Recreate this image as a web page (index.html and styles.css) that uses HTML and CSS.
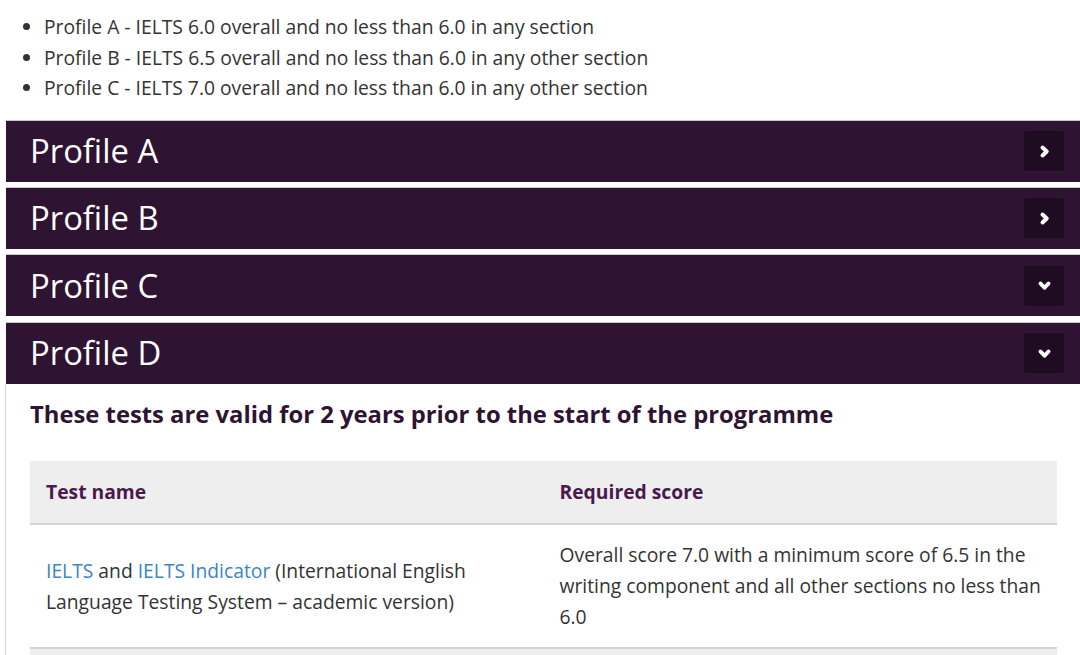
FILE: index.html
```
<!DOCTYPE html>
<html lang="en">
<head>
<meta charset="utf-8">
<title>Profiles</title>
<link rel="stylesheet" href="styles.css">
</head>
<body>
<div class="page">
  <ul class="bullets">
    <li>Profile A - IELTS 6.0 overall and no less than 6.0 in any section</li>
    <li>Profile B - IELTS 6.5 overall and no less than 6.0 in any other section</li>
    <li>Profile C - IELTS 7.0 overall and no less than 6.0 in any other section</li>
  </ul>
  <div class="accordion">
    <div class="item">
      <div class="bar">
        <h2 class="title">Profile A</h2>
        <span class="toggle"><svg width="15" height="15" viewBox="0 0 12 12"><path d="M4.4 2.8 L7.8 6 L4.4 9.2" fill="none" stroke="#fff" stroke-width="3.2" stroke-linecap="round" stroke-linejoin="round"/></svg></span>
      </div>
    </div>
    <div class="item">
      <div class="bar">
        <h2 class="title">Profile B</h2>
        <span class="toggle"><svg width="15" height="15" viewBox="0 0 12 12"><path d="M4.4 2.8 L7.8 6 L4.4 9.2" fill="none" stroke="#fff" stroke-width="3.2" stroke-linecap="round" stroke-linejoin="round"/></svg></span>
      </div>
    </div>
    <div class="item">
      <div class="bar">
        <h2 class="title">Profile C</h2>
        <span class="toggle"><svg width="15" height="15" viewBox="0 0 12 12"><path d="M2.8 4.4 L6 7.8 L9.2 4.4" fill="none" stroke="#fff" stroke-width="3.2" stroke-linecap="round" stroke-linejoin="round"/></svg></span>
      </div>
    </div>
    <div class="item open">
      <div class="bar">
        <h2 class="title">Profile D</h2>
        <span class="toggle"><svg width="15" height="15" viewBox="0 0 12 12"><path d="M2.8 4.4 L6 7.8 L9.2 4.4" fill="none" stroke="#fff" stroke-width="3.2" stroke-linecap="round" stroke-linejoin="round"/></svg></span>
      </div>
      <div class="panel">
        <h3 class="panel-title">These tests are valid for 2 years prior to the start of the programme</h3>
        <table class="scores">
          <thead>
            <tr><th>Test name</th><th>Required score</th></tr>
          </thead>
          <tbody>
            <tr>
              <td><a href="#">IELTS</a> and <a href="#">IELTS Indicator</a> (International English Language Testing System – academic version)</td>
              <td>Overall score 7.0 with a minimum score of 6.5 in the writing component and all other sections no less than 6.0</td>
            </tr>
            <tr class="alt">
              <td>&nbsp;</td>
              <td>&nbsp;</td>
            </tr>
          </tbody>
        </table>
      </div>
    </div>
  </div>
</div>
</body>
</html>
```
FILE: styles.css
```
html, body {
  margin: 0;
  padding: 0;
  background: #fff;
}
body {
  font-family: "Open Sans", "Noto Sans", "DejaVu Sans", sans-serif;
  color: #333;
  overflow: hidden;
  width: 1080px;
  height: 655px;
}
.page {
  padding-left: 6px;
}
.bullets {
  margin: 0;
  padding: 12px 0 0 38px;
  font-size: 19.3px;
  line-height: 30.5px;
  color: #333;
}
.accordion {
  margin-top: 16px;
}
.item {
  margin-bottom: 5.4px;
}
.bar {
  display: flex;
  align-items: center;
  justify-content: space-between;
  height: 62px;
  background: #2f1332;
  border-top: 1px solid #c8c8c8;
  box-sizing: border-box;
  padding: 0 16px 0 24px;
}
.title {
  margin: 0;
  font-weight: 400;
  font-size: 32.8px;
  line-height: 40px;
  color: #fff;
}
.toggle {
  width: 40px;
  height: 40px;
  border-radius: 3px;
  background: #200c22;
  display: flex;
  align-items: center;
  justify-content: center;
}
.item.open {
  margin-bottom: 0;
}
.panel {
  border-left: 1px solid #d6d6d6;
  margin-left: -1px;
  padding: 14px 23px 0 24px;
}
.panel-title {
  margin: 0 0 31px 0;
  font-size: 23.8px;
  line-height: 32px;
  font-weight: 700;
  color: #2f1332;
}
.scores {
  width: 100%;
  border-collapse: collapse;
  table-layout: fixed;
  font-size: 19.3px;
  line-height: 31px;
}
.scores th {
  background: #eeeeee;
  text-align: left;
  color: #4a1a4d;
  font-weight: 700;
  height: 62px;
  padding: 0 16px;
  border-bottom: 2px solid #d4d4d4;
}
.scores td {
  padding: 14.5px 16px;
  vertical-align: middle;
  color: #333;
  border-bottom: 2px solid #d4d4d4;
}
.scores a {
  color: #3a86c8;
  text-decoration: none;
}
.scores tr.alt td {
  background: #eeeeee;
}
```
